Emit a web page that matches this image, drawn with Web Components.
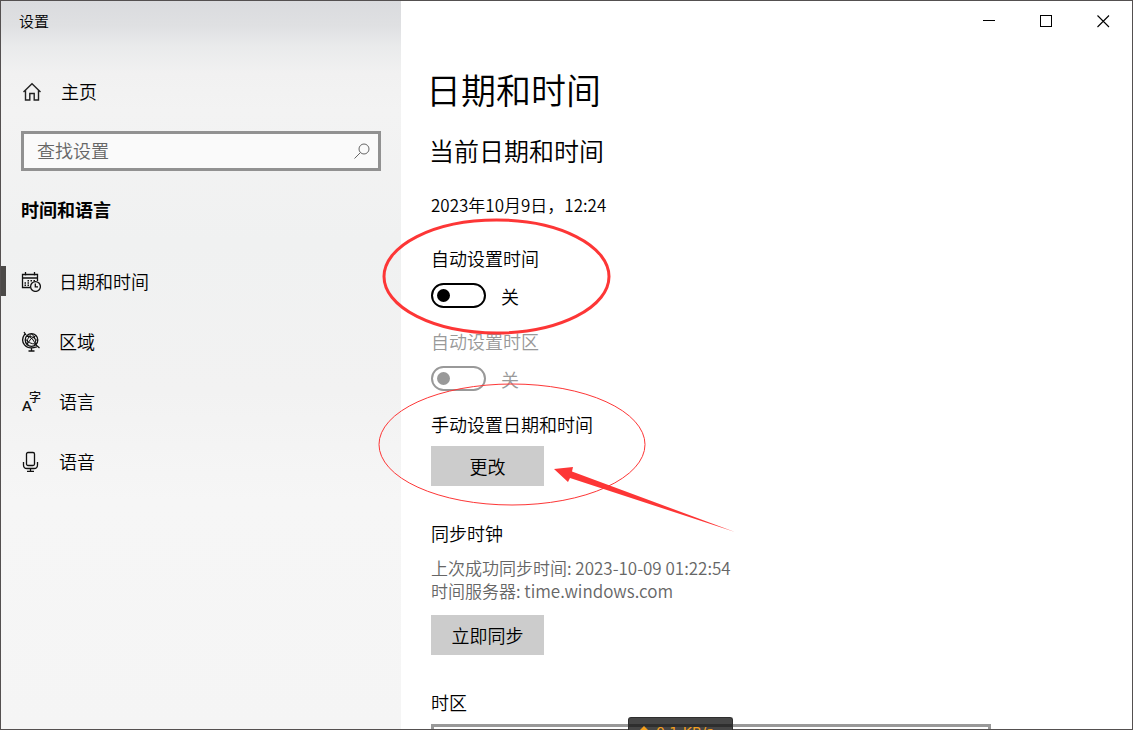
<!DOCTYPE html>
<html lang="zh-CN">
<head>
<meta charset="utf-8">
<title>设置</title>
<style>
  html, body { margin: 0; height: 100%; overflow: hidden; }
  body {
    font: 350 18px/24px "Noto Sans CJK SC", sans-serif;
    color: #000;
    background: #fff;
  }
</style>
</head>
<body>
<settings-window>
  <settings-sidebar slot="sidebar">
    <nav-item current>
      <svg slot="icon" width="20" height="21" viewBox="0 -1 20 21" fill="none" stroke="#111" stroke-width="1.3">
        <path d="M9.5 15.500H1.500V2.500H16.500V9M1.500 6H16.500M4.500 0V3.500M13.500 0V3.500"/>
        <path d="M6.500 8.800h1.500M9.500 8.800h1.500M12.500 8.800h1.500M3.500 11h1.500M6.500 11h1.500M3.500 13.300h1.500M6.500 13.300h1.500" stroke-width="1.400"/>
        <circle cx="14.500" cy="14.500" r="4.900"/><path d="M14.300 11.500V14.800H17"/>
      </svg>日期和时间
    </nav-item>
    <nav-item>
      <svg slot="icon" width="20" height="21" viewBox="0 -1 20 21" fill="none" stroke="#111" stroke-width="1.300">
        <circle cx="10.500" cy="8" r="6.300"/>
        <path stroke-width="1" d="M6.500 3.500Q12 6 15 12.500M15 3.500Q9 6 6 12.500M4.500 7Q8 12 14.500 12M6 4.500Q12 3.500 16.500 9M10.500 2Q4.500 7 7 13.500M11 2Q16.500 8 13.500 13.500"/>
        <path d="M3 0 5 3M15 13 18.500 16M3.800 2.200Q-.5 8 3.500 12.800T15.800 14.800M10.500 16V19M7.500 19H13.500"/>
      </svg>区域
    </nav-item>
    <nav-item>
      <svg slot="icon" width="20" height="21" viewBox="0 -1 20 21" fill="#111" font-weight="500" overflow="visible">
        <text x="1" y="19" font-size="15" font-family="Noto Sans">A</text>
        <text x="8" y="10" font-size="12" font-family="Noto Sans CJK SC">字</text>
      </svg>语言
    </nav-item>
    <nav-item>
      <svg slot="icon" width="20" height="21" viewBox="0 -1 20 21" fill="none" stroke="#111" stroke-width="1.300">
        <rect x="5.500" y="0.500" width="8" height="13" rx="1.500"/>
        <path d="M2.500 10V13Q2.500 16.500 6 16.500H13Q16.500 16.500 16.500 13V10M9.500 16.500V19.300M6 19.300H13"/>
      </svg>语音
    </nav-item>
  </settings-sidebar>
  <settings-page>
    <toggle-setting label="自动设置时间"></toggle-setting>
    <toggle-setting label="自动设置时区" disabled></toggle-setting>
  </settings-page>
</settings-window>
<markup-overlay></markup-overlay>
<speed-meter></speed-meter>

<script>
  const define = (name, html, setup) => {
    const template = document.createElement("template");
    template.innerHTML = html;
    customElements.define(name, class extends HTMLElement {
      connectedCallback() {
        if (this.shadowRoot) return;
        const root = this.attachShadow({ mode: "open" });
        root.append(template.content.cloneNode(true));
        if (setup) setup(this, root);
      }
    });
  };

  define("window-controls", `
    <style>
      :host { display: flex; justify-content: flex-end; height: 40px; }
      button { width: 57px; padding: 0; border: 0; background: none; display: grid; place-items: center; }
      svg { display: block; fill: none; stroke: #000; }
    </style>
    <button aria-label="最小化"><svg width="13" height="13"><path d="M0 5.500H12"/></svg></button>
    <button aria-label="最大化"><svg width="13" height="13"><rect x=".5" y=".5" width="11" height="11"/></svg></button>
    <button aria-label="关闭"><svg width="13" height="13" stroke-width="1.100"><path d="M.5.5 12 12M12 .5.5 12"/></svg></button>
  `);

  define("settings-window", `
    <style>
      :host {
        display: grid; grid-template-columns: 400px minmax(0, 1fr);
        box-sizing: border-box; height: 100vh; overflow: hidden; border: 1px solid #545050;
      }
      main { min-width: 0; overflow: hidden; }
    </style>
    <slot name="sidebar"></slot>
    <main><window-controls></window-controls><slot></slot></main>
  `);

  define("settings-sidebar", `
    <style>
      :host {
        display: flex; flex-direction: column; overflow: hidden;
        background: linear-gradient(#dadbde, #dfe0e2 24px, #e9eaeb 44px, #f1f1f1 72px, #f3f3f3 110px, #f0f1f1 240px, #f2f2f2 390px, #f6f6f6 500px, #f5f5f5);
      }
      .caption { padding: 8px 18px; font-size: 15px; }
      .home { display: flex; align-items: center; gap: 19px; margin-top: 38px; padding-left: 21px; color: inherit; text-decoration: none; }
      svg { display: block; }
      .search {
        display: flex; align-items: center; box-sizing: border-box; height: 40px;
        margin: 28px 20px 0; padding: 0 7px 0 13px; border: 3px solid #919191; background: #fafafa;
      }
      input { flex: 1; min-width: 0; padding: 0 0 2px; border: 0; background: none; font: inherit; outline: 0; }
      input::placeholder { color: #666; opacity: 1; }
      h2 { margin: 26px 20px 30px; font: inherit; font-weight: 700; }
      nav { display: flex; flex-direction: column; }
    </style>
    <div class="caption">设置</div>
    <a class="home" href="#home">
      <svg width="20" height="20" viewBox="0 -1 20 20" fill="none" stroke="#222" stroke-width="1.400"><path d="M1.500 10 10 1.800 18.500 10M3.500 8.500V18H7.800V11.500H12.200V18H16.500V8.500"/></svg>
      主页
    </a>
    <div class="search">
      <input type="text" placeholder="查找设置" aria-label="查找设置">
      <svg width="18" height="18" viewBox="0 0 18 18" fill="none" stroke="#666"><circle cx="11" cy="7" r="5"/><path d="M7.500 10.500 1.500 16.500"/></svg>
    </div>
    <h2>时间和语言</h2>
    <nav><slot></slot></nav>
  `);

  define("nav-item", `
    <style>
      :host { display: block; }
      a { display: flex; align-items: center; height: 60px; gap: 18px; color: inherit; text-decoration: none; }
      a::before { content: ""; width: 5px; height: 30px; margin-right: -3px; }
      :host([current]) a::before { background: #4c4a48; }
      ::slotted(svg) { display: block; }
    </style>
    <a href="#"><slot name="icon"></slot><span><slot></slot></span></a>
  `);

  define("toggle-setting", `
    <style>
      :host { display: flex; flex-direction: column; gap: 13px; margin-bottom: 21px; }
      :host([disabled]) { color: #999; }
      .row { display: flex; align-items: center; gap: 15px; height: 25px; }
      input {
        appearance: none; box-sizing: border-box; width: 55px; height: 25px; margin: 0;
        border: 2px solid currentColor; border-radius: 13px; color: inherit;
        display: flex; align-items: center; padding-left: 4px;
      }
      input::before { content: ""; width: 13px; height: 13px; border-radius: 50%; background: currentColor; }
    </style>
    <label for="toggle"></label>
    <div class="row"><input id="toggle" type="checkbox" role="switch"><span>关</span></div>
  `, (host, root) => {
    root.querySelector("label").textContent = host.getAttribute("label");
    root.querySelector("input").disabled = host.hasAttribute("disabled");
  });

  define("action-button", `
    <style>
      :host { display: block; }
      button { width: 113px; height: 40px; padding: 0; border: 0; background: #ccc; color: #000; font: inherit; }
    </style>
    <button type="button"><slot></slot></button>
  `);

  define("settings-page", `
    <style>
      :host { display: block; padding: 24px 30px 0; }
      h1, h2, h3, p { margin: 0; font: inherit; }
      h1 { font-size: 35px; line-height: 48px; margin: 0 0 20px -5px; }
      h2 { font-size: 25px; line-height: 34px; margin: 0 0 26px -2px; }
      .now { font-size: 17px; margin-bottom: 29px; }
      section { margin-bottom: 35px; }
      h3, label { display: block; margin-bottom: 10px; }
      .info { font-size: 17px; line-height: 23px; color: #666; margin: 11px 0 13px; }
      select {
        display: block; box-sizing: border-box; width: 100%; max-width: 560px; height: 40px;
        border: 3px solid #999; border-radius: 0; background: #fff; appearance: none;
      }
    </style>
    <h1>日期和时间</h1>
    <h2>当前日期和时间</h2>
    <p class="now">2023年10月9日，12:24</p>
    <slot></slot>
    <section>
      <h3>手动设置日期和时间</h3>
      <action-button>更改</action-button>
    </section>
    <section>
      <h3>同步时钟</h3>
      <p class="info">上次成功同步时间: 2023-10-09 01:22:54<br>时间服务器: time.windows.com</p>
      <action-button>立即同步</action-button>
    </section>
    <label for="zone">时区</label>
    <select id="zone"></select>
  `);

  /* Hand-drawn callouts floating above the page. */
  define("markup-overlay", `
    <style>
      :host { position: absolute; inset: 0; overflow: hidden; pointer-events: none; }
      svg { display: block; }
    </style>
    <svg width="760" height="560" fill="none" stroke="#fd3636">
      <ellipse cx="496.500" cy="276.500" rx="112.500" ry="56.500" stroke-width="3"/>
      <ellipse cx="512" cy="444.500" rx="133" ry="60.500"/>
      <path d="M554 469 573 467 572 471.500 735 532 570 478 568 482Z" fill="#fd3636" stroke="none"/>
    </svg>
  `);

  define("speed-meter", `
    <style>
      :host {
        position: absolute; left: 628px; bottom: 0; box-sizing: border-box; width: 105px; height: 13px;
        overflow: hidden; border-radius: 3px 3px 0 0; border: 1px solid #2e2e2e; border-bottom: 0;
        background: linear-gradient(#464646 6px, #2e2e2e 6px, #2e2e2e 9px, #464646 9px);
        color: #f5a01e; font: 14px/16px "DejaVu Sans", sans-serif;
      }
      div { display: flex; gap: 7px; padding: 6px 0 0 10px; white-space: nowrap; }
      svg { display: block; margin-top: 2px; }
    </style>
    <div><svg width="10" height="10"><path d="M5 0 10 5H7V10H3V5H0Z" fill="#f5a01e"/></svg><span>0.1 KB/s</span></div>
  `);
</script>
</body>
</html>
